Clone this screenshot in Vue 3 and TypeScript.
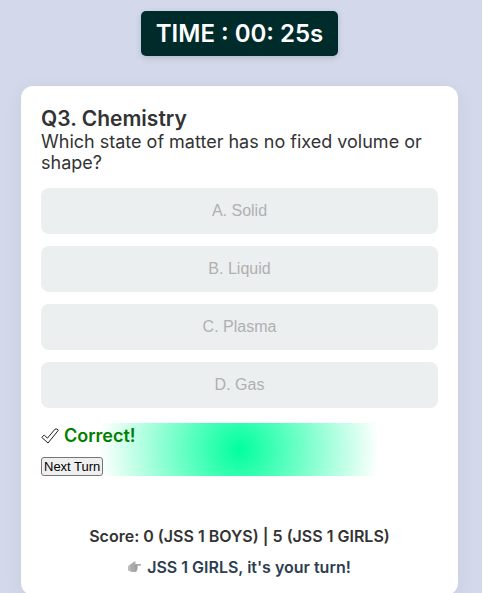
<script setup lang="ts">
import { ref } from 'vue'

interface Question {
  number: number
  subject: string
  text: string
  options: string[]
}

const question: Question = {
  number: 3,
  subject: 'Chemistry',
  text: 'Which state of matter has no fixed volume or shape?',
  options: ['A. Solid', 'B. Liquid', 'C. Plasma', 'D. Gas'],
}
const secondsLeft = ref(25)
const answered = ref(true)
const scores = ref({ boys: 0, girls: 5 })
</script>

<template>
  <div class="page">
    <div class="timer">TIME : 00: {{ secondsLeft }}s</div>

    <main class="card">
      <h2 class="title">Q{{ question.number }}. {{ question.subject }}</h2>
      <p class="question">{{ question.text }}</p>

      <div class="options">
        <button
          v-for="option in question.options"
          :key="option"
          class="option"
          type="button"
          :disabled="answered"
        >{{ option }}</button>
      </div>

      <section class="feedback">
        <p class="verdict">
          <svg class="check" viewBox="0 0 18 16" aria-hidden="true">
            <path d="M.8 9.4 L3.2 7 L6.4 10.2 L14 1.2 Q16 .2 17.4 2.2 L7 15 Z" />
          </svg>
          <span>Correct!</span>
        </p>
        <button class="next" type="button">Next Turn</button>
      </section>

      <footer class="status">
        <p class="score">Score: {{ scores.boys }} (JSS 1 BOYS) | {{ scores.girls }} (JSS 1 GIRLS)</p>
        <p class="turn">
          <svg class="hand" viewBox="0 0 14 12" aria-hidden="true">
            <path class="cuff" d="M0 5 L3 2.8 V10.8 L0 9.4 Z" />
            <path d="M2.6 3.2 L6.5 .6 Q8 .4 7.6 2 L7.2 3 H12.6 Q14 3.8 12.6 4.8 H9.6 V6 Q10.4 6.8 9.4 7.6 Q10 8.6 8.8 9.2 Q9.2 10.8 7.6 11 H4.6 L2.6 10.4 Z" />
            <path class="crease" d="M6.6 5.2 H9.2 M6.8 7.2 H9 M6.6 9.1 H8.6" />
          </svg>
          <span>JSS 1 GIRLS, it's your turn!</span>
        </p>
      </footer>
    </main>
  </div>
</template>

<style>
body {
  margin: 0;
  background: #fff;
}
</style>

<style scoped>
.page {
  box-sizing: border-box;
  min-height: 100vh;
  margin-right: 1px;
  padding: 11px 24px 0 21px;
  display: flex;
  flex-direction: column;
  align-items: center;
  gap: 30px;
  overflow: hidden;
  background: #d3d9eb;
  color: #333;
  font-family: Inter, "Liberation Sans", sans-serif;
}

p,
h2 {
  margin: 0;
}

.timer {
  padding: 8px 15px;
  border-radius: 5px;
  background: #002b2b;
  box-shadow: 0 2px 6px rgba(0, 0, 0, 0.15);
  color: #fff;
  font-size: 24px;
  font-weight: 600;
  line-height: 29px;
}

.card {
  box-sizing: border-box;
  width: 100%;
  padding: 20px 20px 18px;
  border-radius: 12px;
  background: #fff;
  box-shadow: 0 4px 20px rgba(0, 0, 0, 0.06);
}

.title {
  font-size: 21px;
  font-weight: 600;
  line-height: 25px;
}

.question {
  font-size: 18px;
  line-height: 21px;
}

.options {
  display: grid;
  gap: 12px;
  margin: 15px 0;
}

.option {
  height: 46px;
  border: 0;
  border-radius: 8px;
  background: #ebefef;
  color: #b0b0b0;
  font: 16px "Liberation Sans", Arial, sans-serif;
}

.feedback {
  display: flex;
  flex-direction: column;
  align-items: flex-start;
  gap: 8px;
  background: radial-gradient(circle, #00ff9d, transparent 70%);
}

.verdict {
  display: flex;
  align-items: center;
  gap: 5px;
  color: green;
  font-size: 18px;
  font-weight: 600;
  line-height: 26px;
}

.check {
  width: 18px;
  height: 16px;
  fill: #fff;
  stroke: #222;
  stroke-width: 1;
}

.next {
  height: 19px;
  padding: 0 2px;
  border: 1px solid #767676;
  border-radius: 3px;
  background: #efefef;
  color: #000;
  font: 13px "Liberation Sans", Arial, sans-serif;
}

.status {
  display: flex;
  flex-direction: column;
  align-items: center;
  gap: 11px;
  margin-top: 50px;
  font-size: 16px;
  font-weight: 600;
  line-height: 20px;
}

.turn {
  display: flex;
  align-items: center;
  gap: 5px;
  color: #2c3e50;
}

.hand {
  width: 14px;
  height: 12px;
  fill: #aaa;
}

.cuff {
  fill: #bcbcbc;
}

.crease {
  fill: none;
  stroke: #888;
  stroke-width: 0.6;
}
</style>
